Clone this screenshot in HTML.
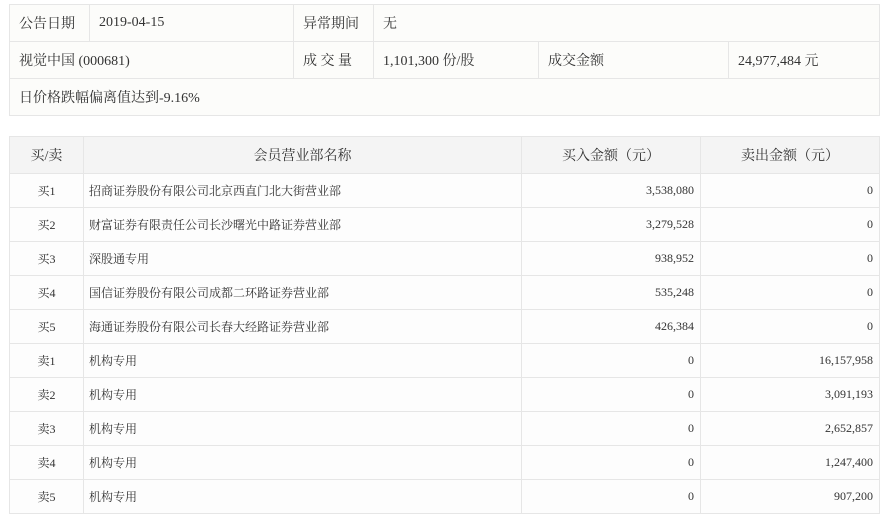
<!DOCTYPE html>
<html><head><meta charset="utf-8"><style>
body{margin:0;background:#fff;font-family:"Liberation Serif","Noto Serif CJK SC",serif;color:#333;}
table{border-collapse:collapse;table-layout:fixed;position:absolute;left:9px;}
td,th{border:1px solid #e6e6e6;padding:0;font-weight:normal;}
#t1{top:4px;width:870px;}
#t1 td{height:36px;background:#fcfcfa;font-size:14px;padding-left:9px;}
#t2{top:136px;width:870px;}
#t2 th{height:36px;background:#f4f4f4;font-size:14px;}
#t2 td{height:33px;background:#fdfdfd;font-size:12px;}
#t2 td.c{text-align:center;}
#t2 td.n{padding-left:5px;}
#t2 td.r{text-align:right;padding-right:6px;}
</style></head><body>
<table id="t1">
<colgroup><col style="width:80px"><col style="width:204px"><col style="width:80px"><col style="width:165px"><col style="width:190px"><col style="width:151px"></colgroup>
<tr><td>公告日期</td><td>2019-04-15</td><td>异常期间</td><td colspan="3">无</td></tr>
<tr><td colspan="2">视觉中国 (000681)</td><td>成 交 量</td><td>1,101,300 份/股</td><td>成交金额</td><td>24,977,484 元</td></tr>
<tr><td colspan="6">日价格跌幅偏离值达到-9.16%</td></tr>
</table>
<table id="t2">
<colgroup><col style="width:74px"><col style="width:438px"><col style="width:179px"><col style="width:179px"></colgroup>
<tr><th>买/卖</th><th>会员营业部名称</th><th>买入金额（元）</th><th>卖出金额（元）</th></tr>
<tr><td class="c">买1</td><td class="n">招商证券股份有限公司北京西直门北大街营业部</td><td class="r">3,538,080</td><td class="r">0</td></tr>
<tr><td class="c">买2</td><td class="n">财富证券有限责任公司长沙曙光中路证券营业部</td><td class="r">3,279,528</td><td class="r">0</td></tr>
<tr><td class="c">买3</td><td class="n">深股通专用</td><td class="r">938,952</td><td class="r">0</td></tr>
<tr><td class="c">买4</td><td class="n">国信证券股份有限公司成都二环路证券营业部</td><td class="r">535,248</td><td class="r">0</td></tr>
<tr><td class="c">买5</td><td class="n">海通证券股份有限公司长春大经路证券营业部</td><td class="r">426,384</td><td class="r">0</td></tr>
<tr><td class="c">卖1</td><td class="n">机构专用</td><td class="r">0</td><td class="r">16,157,958</td></tr>
<tr><td class="c">卖2</td><td class="n">机构专用</td><td class="r">0</td><td class="r">3,091,193</td></tr>
<tr><td class="c">卖3</td><td class="n">机构专用</td><td class="r">0</td><td class="r">2,652,857</td></tr>
<tr><td class="c">卖4</td><td class="n">机构专用</td><td class="r">0</td><td class="r">1,247,400</td></tr>
<tr><td class="c">卖5</td><td class="n">机构专用</td><td class="r">0</td><td class="r">907,200</td></tr>
</table>
</body></html>
